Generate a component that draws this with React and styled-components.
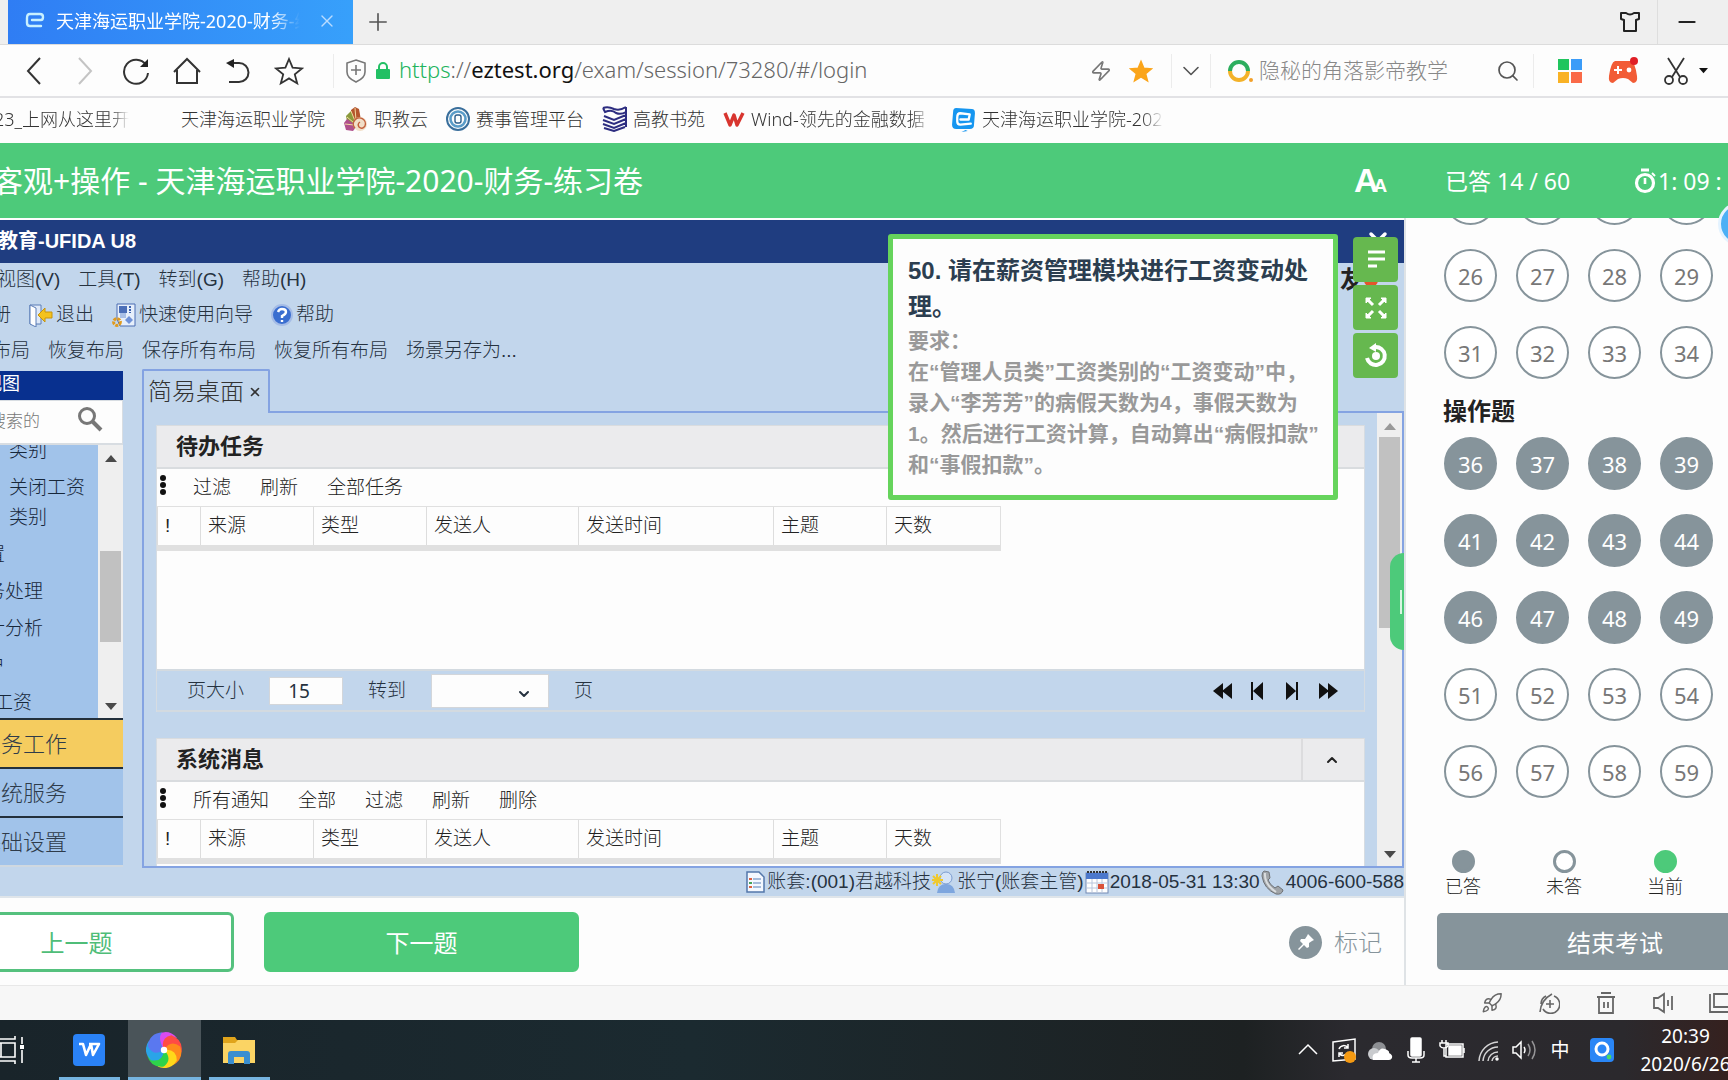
import React, { useState } from 'react'
import styled, { createGlobalStyle } from 'styled-components'
import { ChevronDown, ChevronUp, Zap, Search, Minus, Plus, X, Rocket } from 'lucide-react'

const FONT = '"Noto Sans", "Noto Sans CJK SC", sans-serif'
const ARIAL = '"Liberation Sans", "Noto Sans CJK SC", sans-serif'

const bookmarks = [
  { text: '天津海运职业学院' },
  { text: '职教云', icon: 'shell' },
  { text: '赛事管理平台', icon: 'ring' },
  { text: '高教书苑', icon: 'book' },
  { text: 'Wind-领先的金融数据', icon: 'wind', fade: true },
  { text: '天津海运职业学院-202', icon: 'ez', fade: true },
]

const treeItems = [
  { text: '类别', start: 9 },
  { text: '关闭工资类别', start: 9 },
  { text: '设置', start: -33 },
  { text: '业务处理', start: -33 },
  { text: '统计分析', start: -33 },
  { text: '客户', start: -33 },
  { text: '件工资', start: -25 },
]

const columns = [
  { text: '!', width: 43 },
  { text: '来源', width: 113 },
  { text: '类型', width: 113 },
  { text: '发送人', width: 152 },
  { text: '发送时间', width: 195 },
  { text: '主题', width: 113 },
  { text: '天数', width: 114 },
]

const objective = [26, 27, 28, 29, 31, 32, 33, 34]
const practical = [36, 37, 38, 39, 41, 42, 43, 44, 46, 47, 48, 49, 51, 52, 53, 54, 56, 57, 58, 59]

/* ---------- icons ---------- */

const EzLogo = ({ size = 24, bg = '#1696f0', fg = '#fff' }) => (
  <svg width={size} height={size} viewBox="0 0 24 24" fill="none">
    <path d="M5 1 L20 2 Q23 2 23 6 L22 18 Q22 21 18 21 L5 21 Q1 21 1 17 L2 5 Q2 1 5 1Z" fill={bg} />
    <path d="M10 24 L14 22 L16 23 Z" fill={bg} />
    <path d="M9 12 L17 12 L18 7 L9 6 Q6 6 6 10 L6 14 Q6 17 9 17 L19 16" stroke={fg} strokeWidth="2.2" strokeLinejoin="round" strokeLinecap="round" />
  </svg>
)

const TabLogo = () => (
  <svg width="20" height="20" viewBox="0 0 20 20" fill="none" stroke="#c8f0ff" strokeWidth="2.4" strokeLinejoin="round" strokeLinecap="round">
    <path d="M7 9 H16 Q18 9 18 6 Q18 3 15 3 L5 3 Q2 3 2 7 L2 12 Q2 15 5 15 H16" />
  </svg>
)

const BookmarkIcon = ({ name }) => {
  if (name === 'shell') return (
    <svg width="25" height="26" viewBox="0 0 25 26" fill="none">
      <path d="M12 1 L16 3 L18 14 L8 14 L8 4Z" fill="#b4552d" />
      <path d="M3 10 L8 5 L12 16 L5 20Z" fill="#8a9a3c" />
      <path d="M1 17 L4 13 L14 20 L10 25 L3 24Z" fill="#b0508c" />
      <path d="M12 2 L13 14 M8 5 L12 15 M4 11 L11 17 M2 18 L11 19" stroke="#f3d9a0" />
      <circle cx="17" cy="18" r="7" fill="#f1dfc8" />
      <path d="M12 22 A6 6 0 1 1 22 20 Q19 24 16 21 Q14 18 17 16" stroke="#c2603c" strokeWidth="1.4" />
    </svg>
  )
  if (name === 'ring') return (
    <svg width="24" height="24" viewBox="0 0 24 24" fill="none">
      <circle cx="12" cy="12" r="11" stroke="#3a6f9c" strokeWidth="2" />
      <circle cx="12" cy="12" r="7.5" stroke="#5a9cc8" strokeWidth="2.6" />
      <rect x="9" y="8" width="6" height="8" rx="2" stroke="#2c5f8c" strokeWidth="1.4" />
    </svg>
  )
  if (name === 'book') return (
    <svg width="25" height="26" viewBox="0 0 25 26" fill="none" stroke="#2d2d80" strokeWidth="2">
      <path d="M1 2 Q6 0 12 3 Q18 5 24 1 M1 2 L3 6 Q10 3 14 7 Q19 9 24 6 M2 10 L12 14 L24 9 M1 14 L12 18 L24 13 M1 18 L12 22 L24 17 M2 22 L12 25 L23 21 M24 1V21" />
    </svg>
  )
  if (name === 'wind') return (
    <svg width="22" height="17" viewBox="0 0 22 17" fill="none" stroke="#d8352f" strokeWidth="3.4" strokeLinejoin="round">
      <path d="M2 2 L7 14 L11 4 L14 14 L20 2" />
    </svg>
  )
  return <EzLogo size={25} />
}

const ArrowIcon = ({ right }) => (
  <svg width="16" height="30" viewBox="0 0 16 30" fill="none" stroke="currentColor" strokeWidth="2">
    <path d={right ? 'M2 2 L14 15 L2 28' : 'M14 2 L2 15 L14 28'} />
  </svg>
)

const HomeIcon = () => (
  <svg width="28" height="28" viewBox="0 0 28 28" fill="none" stroke="#333" strokeWidth="2">
    <path d="M1 15 L14 2 L27 15 M4 13 V26 H24 V13" />
  </svg>
)

const FiveStar = ({ size = 30, fill = 'none', stroke = '#333' }) => (
  <svg width={size} height={size} viewBox="0 0 30 30" fill={fill} stroke={stroke} strokeWidth="1.8">
    <path d="M15 3 L18.6 11.6 L28 12.4 L20.8 18.4 L23.2 27.4 L15 22.4 L6.8 27.4 L9.2 18.4 L2 12.4 L11.4 11.6Z" />
  </svg>
)

const SkinIcon = () => (
  <svg width="22" height="22" viewBox="0 0 22 22" fill="none" stroke="#222" strokeWidth="2" strokeLinejoin="round">
    <path d="M2 2 H7 Q11 5 15 2 H20 V8 L17 9 V20 H5 V9 L2 8Z" />
  </svg>
)

const ReloadIcon = () => (
  <svg width="28" height="28" viewBox="0 0 28 28" fill="none" stroke="#333" strokeWidth="2">
    <path d="M24 8 A12 12 0 1 0 26 16" />
    <path d="M26 2 V10 H18Z" fill="#222" stroke="none" />
  </svg>
)

const UndoIcon = () => (
  <svg width="26" height="26" viewBox="0 0 26 26" fill="none" stroke="#333" strokeWidth="2">
    <path d="M3 5 H14 A9 9 0 0 1 14 24 H4" />
    <path d="M1 5 L9 1 V10Z" fill="#222" stroke="none" />
  </svg>
)

const ShieldIcon = () => (
  <svg width="22" height="24" viewBox="0 0 22 24" fill="none" stroke="#777" strokeWidth="1.6">
    <path d="M11 1 L20 4 V13 Q20 19 11 23 Q2 19 2 13 V4Z M6 11 H16 M11 6 V16" />
  </svg>
)

const LockIcon = () => (
  <svg width="16" height="18" viewBox="0 0 16 18" fill="none">
    <path d="M4 8 V5 A4 4 0 0 1 12 5 V8" stroke="#22c064" strokeWidth="2" />
    <rect x="1" y="7" width="14" height="10" rx="1" fill="#22c064" />
  </svg>
)

const SearchLogo = () => (
  <svg width="26" height="24" viewBox="0 0 26 24" fill="none" strokeWidth="4">
    <path d="M2 12 A9 9 0 0 1 20 12" stroke="#2cae5e" />
    <path d="M2 12 A9 9 0 0 0 20 12" stroke="#f3b229" />
    <circle cx="23" cy="21" r="2" fill="#f3a029" />
  </svg>
)

const TilesIcon = () => (
  <svg width="24" height="24" viewBox="0 0 24 24">
    <rect width="11" height="11" fill="#20c55e" /><rect x="13" width="11" height="11" fill="#3b9cf8" />
    <rect y="13" width="11" height="11" fill="#f9b225" /><rect x="13" y="13" width="11" height="11" fill="#fa6a48" />
  </svg>
)

const GameIcon = () => (
  <svg width="32" height="28" viewBox="0 0 32 28">
    <path d="M8 4 H24 Q28 5 30 19 Q31 26 26 26 L21 22 Q16 20 11 22 L6 26 Q1 26 2 19 Q4 5 8 4Z" fill="#f25c36" />
    <path d="M7 13 H15 M11 9 V17" stroke="#fff" strokeWidth="2" />
    <circle cx="22" cy="13" r="2.4" fill="#fff" /><circle cx="27" cy="4" r="4" fill="#e01f26" />
  </svg>
)

const ScissorsIcon = () => (
  <svg width="24" height="28" viewBox="0 0 24 28" fill="none" stroke="#333" strokeWidth="1.8">
    <path d="M4 1 L16 20 M20 1 L8 20" /><circle cx="5" cy="23" r="4" /><circle cx="19" cy="23" r="4" />
  </svg>
)

const StopwatchIcon = () => (
  <svg width="22" height="26" viewBox="0 0 22 26" fill="none" stroke="#fff">
    <circle cx="11" cy="15" r="8.5" strokeWidth="3.2" />
    <path d="M7 2 H15" strokeWidth="3" /><path d="M11 10 V16" strokeWidth="2.6" /><path d="M18 5 L21 8" strokeWidth="2" />
  </svg>
)

const ExitIcon = () => (
  <svg width="24" height="24" viewBox="0 0 24 24">
    <path d="M1 2 H12 V21 H1Z" fill="#dfe9f8" stroke="#5b7cb6" />
    <path d="M1 2 L7 5 V24 L1 21Z" fill="#fff" stroke="#5b7cb6" />
    <path d="M9 12 L16 5 V9 H23 V15 H16 V19Z" fill="#f3c21e" stroke="#c8930b" />
  </svg>
)

const WizardIcon = () => (
  <svg width="24" height="24" viewBox="0 0 24 24">
    <path d="M5 1 H23 V23 H8 L5 16Z" fill="#e6effb" stroke="#4a6cb2" />
    <rect x="7" y="3" width="8" height="7" fill="#4b6fb8" /><path d="M8 10 H14 V15 H8Z" fill="#a9c0e6" />
    <path d="M18 3 V10" stroke="#3b62b0" strokeWidth="2" strokeDasharray="2 1" />
    <path d="M17 13 L21 17 L17 21 L13 17Z" fill="#6f92d8" />
    <circle cx="5" cy="19" r="3.4" fill="none" stroke="#e09a1d" strokeWidth="3" strokeDasharray="3 1" />
  </svg>
)

const HelpIcon = () => (
  <svg width="22" height="22" viewBox="0 0 22 22" fill="none">
    <circle cx="11" cy="11" r="10" fill="#3a6ed0" stroke="#a5bce6" strokeWidth="2" />
    <path d="M7 8 Q8 5 11 5 Q15 5 15 8 Q15 10 11 12 V14 M11 16 V18" stroke="#fff" strokeWidth="2.4" />
  </svg>
)

const DocIcon = () => (
  <svg width="20" height="24" viewBox="0 0 20 24">
    <path d="M1 2 H13 L18 7 V22 H1Z" fill="#f4f8ff" stroke="#5377aa" strokeWidth="1.5" />
    <path d="M7 9 H15 M7 13 H15 M7 17 H15" stroke="#8ba6ce" strokeWidth="1.5" />
    <path d="M3 9 H6 M3 17 H6" stroke="#dd6040" strokeWidth="2" /><path d="M3 13 H6" stroke="#46a358" strokeWidth="2" />
  </svg>
)

const UserIcon = () => (
  <svg width="24" height="24" viewBox="0 0 24 24">
    <path d="M5 23 Q6 14 14 14 Q22 14 23 23Z" fill="#7ea6de" /><circle cx="14" cy="8" r="6" fill="#d5e4f7" stroke="#7b9cd0" />
    <path d="M5 4 V16 M0 10 H11 M1 6 L9 14 M9 6 L1 14" stroke="#f0c92d" strokeWidth="2" />
  </svg>
)

const CalendarIcon = () => (
  <svg width="24" height="24" viewBox="0 0 24 24">
    <rect x="1" y="3" width="22" height="20" fill="#fff" stroke="#7289b3" /><rect x="1" y="3" width="22" height="6" fill="#4c78cc" />
    <path d="M2 2 H22" stroke="#333" strokeWidth="2" strokeDasharray="2 1" />
    <path d="M2 13 H22 M2 18 H22 M7 9 V23 M12 9 V23 M17 9 V23" stroke="#b9c6dc" /><rect x="13" y="14" width="6" height="5" fill="#da5239" />
  </svg>
)

const PhoneIcon = () => (
  <svg width="24" height="25" viewBox="0 0 24 25">
    <path d="M3 1 L8 2 L9 8 L7 10 Q9 15 14 18 L17 16 L22 20 Q21 25 15 24 Q3 19 1 6 Q1 2 3 1Z" fill="#a0a4a8" stroke="#6e7175" />
    <path d="M4 3 Q3 14 15 22" stroke="#dadddf" strokeWidth="2" fill="none" />
  </svg>
)

const ListGlyph = () => (
  <svg width="20" height="20" viewBox="0 0 20 20" stroke="#fff" strokeWidth="3"><path d="M2 2 H19 M2 9 H19 M2 16 H11" /></svg>
)

const ExpandGlyph = () => (
  <svg width="22" height="22" viewBox="0 0 22 22" fill="#fff" stroke="#fff" strokeWidth="3">
    <path d="M3 3 L8 8 M19 3 L14 8 M3 19 L8 14 M19 19 L14 14" />
    <path d="M1 1 H6 L1 6Z M21 1 V6 L16 1Z M1 21 V16 L6 21Z M21 21 H16 L21 16Z" strokeWidth="1" />
  </svg>
)

const RestartGlyph = () => (
  <svg width="24" height="25" viewBox="0 0 24 25" fill="none" stroke="#fff" strokeWidth="4">
    <path d="M11 4 A9 9 0 1 1 3 15" /><circle cx="12" cy="13" r="4" fill="#fff" stroke="none" />
    <path d="M5 5 L12 0 V9Z" fill="#fff" stroke="none" />
  </svg>
)

const PinGlyph = () => (
  <svg width="20" height="20" viewBox="0 0 20 20" fill="#fff">
    <path d="M12 2 L18 8 L16 9 L13 11 L13 15 L11 16 L8 13 L3 18 L2 17 L7 12 L4 9 L5 7 L9 7 L11 4Z" />
  </svg>
)

const PageGlyph = ({ type }) => (
  <svg width="20" height="18" viewBox="0 0 20 18" fill="#111">
    {type === 'first' && <path d="M10 1 V17 L0 9Z M19 1 V17 L9 9Z" />}
    {type === 'prev' && <path d="M3 0 H5 V18 H3Z M15 0 V18 L5 9Z" />}
    {type === 'next' && <path d="M13 0 H15 V18 H13Z M3 0 V18 L13 9Z" />}
    {type === 'last' && <path d="M1 1 V17 L11 9Z M10 1 V17 L20 9Z" />}
  </svg>
)

const Tri = ({ down, size = 12, color = '#4a4a4a' }) => (
  <svg width={size} height="7" viewBox="0 0 12 7" fill={color}><path d={down ? 'M0 0H12L6 7Z' : 'M0 7H12L6 0Z'} /></svg>
)

const DotsIcon = () => (
  <svg width="6" height="20" viewBox="0 0 6 20" fill="#111"><circle cx="3" cy="3" r="3" /><circle cx="3" cy="10" r="3" /><circle cx="3" cy="17" r="3" /></svg>
)

const BoostIcon = () => (
  <svg width="22" height="22" viewBox="0 0 22 22" fill="none" stroke="#666" strokeWidth="1.6">
    <path d="M2 20 Q3 8 14 2 M16 4 A9 9 0 1 1 5 17 M8 4 A9 9 0 0 0 3 12 M8 12 H16 M12 8 V16" />
  </svg>
)

const TrashIcon = () => (
  <svg width="20" height="22" viewBox="0 0 20 22" fill="none" stroke="#666" strokeWidth="1.8">
    <path d="M5 1 H15 M1 5 H19 M3 5 V21 H17 V5 M8 10 V16 M12 10 V16" />
  </svg>
)

const SpeakerIcon = () => (
  <svg width="22" height="22" viewBox="0 0 22 22" fill="none" stroke="#666" strokeWidth="1.8">
    <path d="M2 6 H6 L12 2 V20 L6 16 H2Z M16 8 V14 M20 4 V18" />
  </svg>
)

const WindowsIcon = () => (
  <svg width="24" height="22" viewBox="0 0 24 22" fill="none" stroke="#666" strokeWidth="1.8">
    <path d="M6 2 H24 V15 H6Z M2 2 V20 H24" />
  </svg>
)

const TaskViewIcon = () => (
  <svg width="28" height="28" viewBox="0 0 28 28" fill="none" stroke="#fff" strokeWidth="1.6">
    <path d="M0 3 H15 V0 M0 7 H15 V21 H0 M0 25 H15 V28 M1 7 V21 M22 1 V8 M22 14 V27" /><rect x="20" y="9" width="4" height="4" fill="#fff" stroke="none" />
  </svg>
)

const WpsIcon = () => (
  <svg width="32" height="32" viewBox="0 0 32 32" fill="none">
    <rect width="32" height="32" rx="4" fill="#2a82f7" /><path d="M6 10 H10 L13 21 L18 10 L20 21 L26 10 H16" stroke="#fff" strokeWidth="2.6" strokeLinejoin="round" />
  </svg>
)

const swirl = ['#d84bf0', '#ff4b45', '#ff8a1c', '#ffd81a', '#2ed34a', '#2aa4e8', '#5a78f0']
const SwirlIcon = () => (
  <svg width="36" height="36" viewBox="-18 -18 36 36">
    {swirl.map((color, i) => (
      <path key={color} d="M0 0 Q-12 -4 -7 -15 Q4 -22 13 -12 Q6 -14 0 0Z" fill={color} transform={`rotate(${i * 51.4})`} />
    ))}
    <circle r="3.2" fill="#fff" />
  </svg>
)

const FolderIcon = () => (
  <svg width="32" height="28" viewBox="0 0 32 28">
    <path d="M0 1 H12 L14 4 H32 V27 H0Z" fill="#e0a41b" /><path d="M0 7 H12 L15 4 H32 V27 H0Z" fill="#fbd464" />
    <path d="M5 28 V18 Q5 15 8 15 H24 Q27 15 27 18 V28 H21 V21 H11 V28Z" fill="#3b8fd0" />
  </svg>
)

const TrayIcon = ({ name }) => {
  const line = { fill: 'none', stroke: '#fff', strokeWidth: 1.5 }
  return (
    <svg width="26" height="26" viewBox="0 0 26 26" {...line}>
      {name === 'up' && <path d="M4 17 L13 8 L22 17" />}
      {name === 'sync' && <>
        <path d="M2 5 L24 2 V22 L2 24Z M8 12 A5 5 0 0 1 17 11 M17 15 A5 5 0 0 1 8 16 M17 7 V11 H13 M8 20 V16 H12" />
        <circle cx="19" cy="20" r="6" fill="#f59a12" stroke="none" />
      </>}
      {name === 'cloud' && <g stroke="none">
        <circle cx="12" cy="12" r="7" fill="#8d8f93" /><circle cx="7" cy="17" r="6" fill="#c9cbce" />
        <path d="M6 23 Q4 16 11 16 Q13 10 18 12 Q23 14 22 16 Q26 18 25 21 Q24 23 22 23Z" fill="#fff" />
      </g>}
      {name === 'mic' && <><rect x="8" y="1" width="10" height="18" rx="1" fill="#fff" /><path d="M5 14 V18 Q5 21 9 21 H17 Q21 21 21 18 V14 M13 21 V25 M9 25 H17" /></>}
      {name === 'power' && <><rect x="7" y="7" width="17" height="13" /><rect x="10" y="9" width="12" height="9" fill="#fff" /><path d="M25 11 V16 M3 3 V6 M7 3 V6 M1 6 H9 V9 Q8 11 5 11 Q2 11 1 9Z M5 11 V19 H7" /></>}
      {name === 'wifi' && <><path d="M4 24 A20 20 0 0 1 23 5 M8 24 A15 15 0 0 1 23 10 M13 24 A10 10 0 0 1 23 15 M17 24 A6 6 0 0 1 23 19" opacity="0.8" /><circle cx="22" cy="22" r="1" fill="#fff" /></>}
      {name === 'sound' && <><path d="M2 10 H5 L10 5 V21 L5 16 H2Z M13 10 Q15 13 13 16" /><path d="M17 7 Q21 13 17 19 M21 4 Q27 13 21 22" opacity="0.5" /></>}
      {name === 'q' && <><rect x="1" y="1" width="24" height="24" rx="4" fill="#2a86f6" stroke="none" /><circle cx="13" cy="12" r="6" strokeWidth="3" /><circle cx="20" cy="20" r="2.4" fill="#4bd964" stroke="none" /></>}
    </svg>
  )
}

/* ---------- pieces ---------- */

const TaskTable = () => (
  <Table>
    <colgroup>{columns.map(c => <Col key={c.text} $w={c.width} />)}</colgroup>
    <thead>
      <tr>{columns.map(c => <th key={c.text} scope="col">{c.text}</th>)}</tr>
    </thead>
  </Table>
)

const Card = ({ title, tools, children }) => (
  <CardBox>
    <CardHeader>
      <h2>{title}</h2>
      <button aria-label="收起"><ChevronUp size={16} strokeWidth={3} /></button>
    </CardHeader>
    <CardTools>
      <DotsIcon />
      {tools.map(t => <TextButton key={t}>{t}</TextButton>)}
    </CardTools>
    <TaskTable />
    {children}
  </CardBox>
)

function App() {
  const [pageSize, setPageSize] = useState('15')
  const [keyword, setKeyword] = useState('隐秘的角落影帝教学')

  return (
    <Page>
      <GlobalStyle />

      <TabBar>
        <BrowserTab>
          <TabLogo />
          <Fade $w={244}>天津海运职业学院-2020-财务-练</Fade>
          <button aria-label="关闭"><X size={20} strokeWidth={1.6} /></button>
        </BrowserTab>
        <PlainButton aria-label="新标签页"><Plus size={28} strokeWidth={1.4} /></PlainButton>
        <WindowTools>
          <PlainButton aria-label="皮肤"><SkinIcon /></PlainButton>
          <PlainButton aria-label="最小化"><Minus size={26} strokeWidth={2} /></PlainButton>
        </WindowTools>
      </TabBar>

      <AddressBar>
        <NavButton aria-label="后退"><ArrowIcon /></NavButton>
        <NavButton aria-label="前进" disabled><ArrowIcon right /></NavButton>
        <NavButton aria-label="刷新"><ReloadIcon /></NavButton>
        <NavButton aria-label="主页"><HomeIcon /></NavButton>
        <NavButton aria-label="恢复"><UndoIcon /></NavButton>
        <NavButton aria-label="收藏"><FiveStar /></NavButton>
        <UrlBox>
          <ShieldIcon />
          <LockIcon />
          <Url><em>https</em>://<b>eztest.org</b>/exam/session/73280/#/login</Url>
          <Zap size={22} strokeWidth={1.8} color="#777" />
          <FiveStar size={24} fill="#fba51b" stroke="#fba51b" />
        </UrlBox>
        <DropButton aria-label="展开"><ChevronDown size={28} strokeWidth={1.4} /></DropButton>
        <SearchBox>
          <SearchLogo />
          <input aria-label="搜索" value={keyword} onChange={e => setKeyword(e.target.value)} />
          <Search size={24} strokeWidth={1.7} color="#555" />
        </SearchBox>
        <Plugins>
          <TilesIcon />
          <GameIcon />
          <span><ScissorsIcon /><Tri down size={9} color="#111" /></span>
        </Plugins>
      </AddressBar>

      <Bookmarks>
        <Fade $w={135}>23_上网从这里开</Fade>
        {bookmarks.map(b => (
          <a href="#" key={b.text}>
            {b.icon && <BookmarkIcon name={b.icon} />}
            {b.fade ? <Fade $w={182}>{b.text}</Fade> : b.text}
          </a>
        ))}
      </Bookmarks>

      <ExamHeader>
        <h1>客观+操作 - 天津海运职业学院-2020-财务-练习卷</h1>
        <FontSize aria-label="字号">A<small>A</small></FontSize>
        <Answered>已答 14 / 60</Answered>
        <Timer><StopwatchIcon />1: 09 :</Timer>
        <Bubble><EzLogo size={24} bg="none" /></Bubble>
      </ExamHeader>

      <Body>
        <Main>
          <Erp>
            <ErpTitle>教育-UFIDA U8</ErpTitle>
            <MenuRow $h={33}>
              <TextButton>视图(V)</TextButton>
              <TextButton>工具(T)</TextButton>
              <TextButton>转到(G)</TextButton>
              <TextButton>帮助(H)</TextButton>
              <Brand>友<i /></Brand>
            </MenuRow>
            <MenuRow $h={37} $cut={8}>
              <TextButton>册</TextButton>
              <TextButton><ExitIcon />退出</TextButton>
              <TextButton><WizardIcon />快速使用向导</TextButton>
              <TextButton><HelpIcon />帮助</TextButton>
            </MenuRow>
            <MenuRow $h={35} $cut={8}>
              <TextButton>布局</TextButton>
              <TextButton>恢复布局</TextButton>
              <TextButton>保存所有布局</TextButton>
              <TextButton>恢复所有布局</TextButton>
              <TextButton>场景另存为...</TextButton>
            </MenuRow>

            <WorkArea>
              <Side>
                <SideTitle>视图</SideTitle>
                <SideSearch>
                  <input aria-label="搜索功能" placeholder="搜索的" />
                  <svg width="25" height="25" viewBox="0 0 25 25" fill="none" stroke="#777">
                    <circle cx="9" cy="9" r="7.5" strokeWidth="3" /><path d="M14 14 L23 23" strokeWidth="4" />
                  </svg>
                </SideSearch>
                <TreeWrap>
                  <Tree>
                    {treeItems.map((t, i) => <li key={i}><TreeText $start={t.start}>{t.text}</TreeText></li>)}
                  </Tree>
                  <ScrollTrack><Tri /><Thumb $top={89} $h={91} /><Tri down /></ScrollTrack>
                </TreeWrap>
                <SideTab $active>业务工作</SideTab>
                <SideTab>系统服务</SideTab>
                <SideTab>基础设置</SideTab>
              </Side>

              <Desk>
                <DeskTab>简易桌面<button aria-label="关闭桌面"><X size={14} strokeWidth={2.8} /></button></DeskTab>
                <DeskBody>
                  <Cards>
                    <Card title="待办任务" tools={['过滤', '刷新', '全部任务']}>
                      <Blank />
                      <Pager>
                        <label htmlFor="size">页大小</label>
                        <input id="size" value={pageSize} onChange={e => setPageSize(e.target.value)} />
                        <label htmlFor="goto">转到</label>
                        <SelectWrap>
                          <select id="goto"><option></option></select>
                          <ChevronDown size={16} strokeWidth={3} />
                        </SelectWrap>
                        <span>页</span>
                        <PageNav>
                          {['first', 'prev', 'next', 'last'].map(t => <button key={t} aria-label={t}><PageGlyph type={t} /></button>)}
                        </PageNav>
                      </Pager>
                    </Card>
                    <Card title="系统消息" tools={['所有通知', '全部', '过滤', '刷新', '删除']} />
                  </Cards>
                  <ScrollTrack><Tri color="#999" /><Thumb $top={7} $h={191} /><Tri down /></ScrollTrack>
                </DeskBody>
              </Desk>
            </WorkArea>

            <StatusRow>
              <DocIcon /><span>账套:(001)君越科技</span>
              <UserIcon /><span>张宁(账套主管)</span>
              <CalendarIcon /><span>2018-05-31 13:30</span>
              <PhoneIcon /><span>4006-600-588</span>
            </StatusRow>

            <Question>
              <h3>50. 请在薪资管理模块进行工资变动处<br />理。</h3>
              <p>
                要求：<br />
                在“管理人员类”工资类别的“工资变动”中，<br />
                录入“李芳芳”的病假天数为4，事假天数为<br />
                1。然后进行工资计算，自动算出“病假扣款”<br />
                和“事假扣款”。
              </p>
            </Question>
            <CloseMark><X size={28} strokeWidth={3} /></CloseMark>
            <SideTools>
              <button aria-label="题目"><ListGlyph /></button>
              <button aria-label="全屏"><ExpandGlyph /></button>
              <button aria-label="重做"><RestartGlyph /></button>
            </SideTools>
            <Handle aria-label="收起答题卡" />
          </Erp>

          <Actions>
            <ActionButton $cut={81}>上一题</ActionButton>
            <ActionButton $solid>下一题</ActionButton>
            <Mark><i><PinGlyph /></i>标记</Mark>
          </Actions>
        </Main>

        <Aside>
          <Sheet>
            <Numbers>
              {['第21题', '第22题', '第23题', '第24题'].map(n => <Num key={n} aria-label={n} />)}
              {objective.map(n => <Num key={n}>{n}</Num>)}
            </Numbers>
            <h2>操作题</h2>
            <Numbers>
              {practical.map(n => <Num key={n} $done={n < 50}>{n}</Num>)}
            </Numbers>
          </Sheet>
          <Legend>
            <li><Dot $bg="#86949b" $line="#86949b" />已答</li>
            <li><Dot $bg="#fff" $line="#86949b" />未答</li>
            <li><Dot $bg="#4dca7a" $line="#4dca7a" />当前</li>
          </Legend>
          <Finish>结束考试</Finish>
        </Aside>
      </Body>

      <BrowserFooter>
        <PlainButton aria-label="加速"><Rocket size={22} strokeWidth={1.6} /></PlainButton>
        <PlainButton aria-label="下载"><BoostIcon /></PlainButton>
        <PlainButton aria-label="清理"><TrashIcon /></PlainButton>
        <PlainButton aria-label="声音"><SpeakerIcon /></PlainButton>
        <PlainButton aria-label="窗口"><WindowsIcon /></PlainButton>
      </BrowserFooter>

      <TaskBar>
        <TaskView aria-label="任务视图"><TaskViewIcon /></TaskView>
        <TaskApp aria-label="WPS"><WpsIcon /></TaskApp>
        <TaskApp aria-label="浏览器" $active><SwirlIcon /></TaskApp>
        <TaskApp aria-label="文件"><FolderIcon /></TaskApp>
        <Tray>
          {['up', 'sync', 'cloud', 'mic', 'power', 'wifi', 'sound'].map(n => <TrayIcon key={n} name={n} />)}
          <span>中</span>
          <TrayIcon name="q" />
        </Tray>
        <Clock><span>20:39</span><span>2020/6/26</span></Clock>
      </TaskBar>
    </Page>
  )
}

export default App

/* ---------- styles ---------- */

const GlobalStyle = createGlobalStyle`
  *{
    box-sizing: border-box;
  }
  body{
    margin: 0;
    font-family: ${FONT};
    font-weight: 300;
    color: #222;
    background: #fdfdfd;
  }
  h1,h2,h3,p,ul{
    margin: 0;
    padding: 0;
    list-style: none;
  }
  button,input,select{
    font: inherit;
    color: inherit;
    border: 0;
    padding: 0;
    background: none;
    outline: none;
  }
  a{
    color: inherit;
    text-decoration: none;
  }
  svg{
    flex: none;
  }
`

const Page = styled.div`
  min-height: 100vh;
  display: flex;
  flex-direction: column;
  overflow: hidden;
`

const PlainButton = styled.button`
  display: flex;
  align-items: center;
  justify-content: center;
  color: #555;
`

const TabBar = styled.div`
  display: flex;
  height: 45px;
  padding-left: 8px;
  background: #efefef;
  border-bottom: 1px solid #dcdcdc;
  > ${PlainButton}{
    width: 50px;
  }
`

const Fade = styled.span`
  width: ${p => p.$w}px;
  overflow: hidden;
  white-space: nowrap;
  mask-image: linear-gradient(90deg, #000 88%, transparent);
`

const BrowserTab = styled.div`
  display: flex;
  align-items: center;
  gap: 11px;
  width: 345px;
  padding: 0 16px 2px 17px;
  font-size: 18px;
  line-height: 26px;
  font-weight: 400;
  color: #fff;
  background: linear-gradient(90deg, #2f7df4, #37a0fb);
  button{
    display: flex;
    margin-left: auto;
    color: #b9dcff;
  }
`

const WindowTools = styled.div`
  display: flex;
  margin-left: auto;
  ${PlainButton}{
    width: 71px;
    color: #222;
  }
  ${PlainButton} + ${PlainButton}{
    padding-right: 12px;
    border-left: 1px solid #dedede;
  }
  ${PlainButton}:first-child{
    padding-left: 16px;
  }
`

const AddressBar = styled.div`
  display: flex;
  align-items: center;
  height: 53px;
  padding-left: 8px;
  background: #fdfdfd;
  border-bottom: 2px solid #e2e2e5;
`

const NavButton = styled(PlainButton)`
  width: 51px;
  color: ${p => (p.disabled ? '#c4c4c4' : '#333')};
`

const UrlBox = styled.div`
  display: flex;
  flex: 1;
  align-items: center;
  height: 34px;
  margin-left: 19px;
  padding: 0 18px 0 11px;
  gap: 8px;
  border-left: 1px solid #ececec;
  border-right: 1px solid #ececec;
  > svg:nth-last-child(2){
    margin-right: 9px;
  }
`

const Url = styled.div`
  flex: 1;
  padding-bottom: 3px;
  font-size: 22px;
  line-height: 30px;
  color: #666;
  em{
    font-style: normal;
    color: #22b45c;
  }
  b{
    font-weight: 400;
    color: #111;
  }
`

const DropButton = styled(PlainButton)`
  width: 38px;
  height: 34px;
`

const SearchBox = styled.label`
  display: flex;
  align-items: center;
  width: 324px;
  height: 34px;
  gap: 5px;
  padding: 0 13px 0 17px;
  border-left: 1px solid #ececec;
  border-right: 1px solid #ececec;
  input{
    flex: 1;
    min-width: 0;
    padding-bottom: 2px;
    font-size: 21px;
    line-height: 30px;
    color: #888;
  }
`

const Plugins = styled.div`
  display: flex;
  align-items: center;
  width: 194px;
  padding-left: 24px;
  gap: 25px;
  span{
    display: flex;
    align-items: center;
    gap: 11px;
  }
`

const Bookmarks = styled.nav`
  display: flex;
  align-items: center;
  height: 45px;
  padding-bottom: 3px;
  gap: 18px;
  font-size: 18px;
  line-height: 26px;
  color: #333;
  background: #fdfdfd;
  white-space: nowrap;
  > ${Fade}{
    margin-left: -6px;
    margin-right: 34px;
  }
  a{
    display: flex;
    align-items: center;
    gap: 6px;
  }
`

const ExamHeader = styled.header`
  position: relative;
  display: flex;
  align-items: center;
  height: 75px;
  color: #fff;
  background: #4dca7a;
  white-space: nowrap;
  h1{
    flex: 1;
    margin-left: -7px;
    font-size: 30px;
    line-height: 44px;
    font-weight: 400;
  }
`

const FontSize = styled.button`
  width: 91px;
  padding-top: 4px;
  text-align: left;
  font-family: ${ARIAL};
  font-size: 34px;
  line-height: 34px;
  font-weight: 700;
  small{
    margin-left: -5px;
    font-size: 19px;
  }
`

const Answered = styled.div`
  width: 189px;
  font-size: 23px;
  line-height: 34px;
  font-weight: 400;
`

const Timer = styled.div`
  display: flex;
  align-items: center;
  width: 94px;
  gap: 2px;
  font-size: 23px;
  line-height: 34px;
  font-weight: 400;
`

const Bubble = styled.div`
  position: absolute;
  right: -34px;
  top: 59px;
  z-index: 2;
  width: 44px;
  height: 44px;
  padding: 7px 4px;
  border: 3px solid #e4f3ff;
  border-radius: 50%;
  background: #4cb0f5;
`

const Body = styled.div`
  display: flex;
  flex: 1;
`

const Main = styled.main`
  flex: 1;
  min-width: 0;
  padding-top: 2px;
`

const Erp = styled.section`
  position: relative;
  overflow: hidden;
  font-family: ${ARIAL};
  background: #c2d6ec;
  border-bottom: 2px solid #dfe5ea;
`

const ErpTitle = styled.div`
  height: 43px;
  text-indent: -2px;
  font-size: 20px;
  line-height: 42px;
  font-weight: 700;
  color: #fff;
  background: #1f3d80;
`

const TextButton = styled.button`
  display: flex;
  align-items: center;
  gap: 3px;
  white-space: nowrap;
`

const MenuRow = styled.div`
  display: flex;
  align-items: center;
  height: ${p => p.$h}px;
  gap: 18px;
  font-size: 19px;
  line-height: 28px;
  color: #26323f;
  > :first-child{
    margin-left: -${p => p.$cut || 3}px;
  }
`

const Brand = styled.b`
  display: flex;
  align-items: center;
  margin-left: auto;
  margin-right: 26px;
  font-size: 24px;
  font-weight: 700;
  color: #222;
  i{
    width: 14px;
    height: 14px;
    border-radius: 50%;
    background: #e4552b;
  }
`

const WorkArea = styled.div`
  display: flex;
  align-items: flex-start;
  gap: 19px;
`

const Side = styled.aside`
  width: 123px;
  margin-top: 3px;
  overflow: hidden;
  border-bottom: 2px solid #cfd8e0;
`

const SideTitle = styled.div`
  height: 29px;
  padding-right: 103px;
  direction: rtl;
  font-size: 18px;
  line-height: 27px;
  font-weight: 400;
  white-space: nowrap;
  color: #fff;
  background: #08308f;
`

const SideSearch = styled.label`
  display: flex;
  align-items: center;
  justify-content: space-between;
  height: 45px;
  padding-right: 19px;
  background: #fdfdfd;
  border: 1px solid #d8dde2;
  border-left: 0;
  border-bottom-width: 2px;
  input{
    width: 60px;
    margin-left: -11px;
    font-size: 17px;
    line-height: 24px;
  }
  input::placeholder{
    color: #777;
  }
  svg{
    margin-bottom: 6px;
  }
`

const TreeWrap = styled.div`
  display: flex;
  height: 273px;
  overflow: hidden;
`

const Tree = styled.ul`
  display: flex;
  flex: 1;
  flex-direction: column;
  min-width: 0;
  gap: 7px;
  margin-top: -9px;
  overflow: hidden;
  font-size: 19px;
  line-height: 30px;
  color: #17273a;
  background: #a1c3ea;
`

const TreeText = styled.div`
  width: 80px;
  margin-left: ${p => p.$start}px;
`

const ScrollTrack = styled.div`
  display: flex;
  flex-direction: column;
  align-items: center;
  width: 25px;
  padding: 10px 0 8px;
  background: #efefef;
  > svg:last-child{
    margin-top: auto;
  }
`

const Thumb = styled.div`
  width: 21px;
  height: ${p => p.$h}px;
  margin-top: ${p => p.$top}px;
  background: #c1c1c1;
`

const SideTab = styled.button`
  display: block;
  width: 145px;
  height: 49px;
  margin-left: -21px;
  padding-top: 2px;
  text-align: left;
  font-size: 22px;
  line-height: 45px;
  color: #2e3b4a;
  background: ${p => (p.$active ? '#f5cc5f' : '#a1c3ea')};
  border-top: 2px solid #23303c;
`

const Desk = styled.div`
  flex: 1;
  min-width: 0;
  padding-top: 1px;
`

const DeskTab = styled.div`
  position: relative;
  z-index: 1;
  display: flex;
  align-items: center;
  width: 128px;
  height: 44px;
  margin-bottom: -2px;
  padding-left: 4px;
  gap: 4px;
  font-size: 24px;
  line-height: 36px;
  white-space: nowrap;
  color: #333;
  background: #c2d6ec;
  border: 2px solid #84a3e2;
  border-bottom: 0;
  border-radius: 2px 2px 0 0;
  button{
    display: flex;
  }
`

const DeskBody = styled.div`
  display: flex;
  height: 457px;
  border: 2px solid #84a3e2;
  overflow: hidden;
`

const Cards = styled.div`
  display: flex;
  flex: 1;
  flex-direction: column;
  min-width: 0;
  gap: 26px;
  padding: 12px 12px 0;
`

const CardBox = styled.section`
  flex: 1;
  background: #fdfdfd;
  border: 0 solid #d6dce2;
  border-width: 0 1px;
`

const CardHeader = styled.div`
  display: flex;
  height: 44px;
  padding-left: 19px;
  background: #ebebed;
  border: 0 solid #d9dcdf;
  border-width: 1px 0 2px;
  h2{
    flex: 1;
    font-size: 22px;
    line-height: 42px;
    color: #222;
  }
  button{
    display: flex;
    align-items: center;
    justify-content: center;
    width: 63px;
    padding-right: 4px;
    border-left: 2px solid #dcdcde;
  }
`

const CardTools = styled.div`
  display: flex;
  align-items: center;
  height: 37px;
  gap: 29px;
  padding-left: 3px;
  font-size: 19px;
  line-height: 28px;
  > svg{
    margin-right: -2px;
    margin-bottom: 5px;
  }
`

const Table = styled.table`
  table-layout: fixed;
  width: 843px;
  border-collapse: separate;
  border-spacing: 0;
  border: 0 solid #e0e0e0;
  border-width: 1px 1px 6px 0;
  th{
    height: 38px;
    padding: 0 0 0 7px;
    text-align: left;
    font-size: 19px;
    line-height: 28px;
    font-weight: 300;
    border-left: 1px solid #ddd;
  }
`

const Col = styled.col`
  width: ${p => p.$w}px;
`

const Blank = styled.div`
  height: 118px;
`

const Pager = styled.div`
  display: flex;
  align-items: center;
  height: 43px;
  padding: 0 26px 0 30px;
  gap: 25px;
  font-size: 19px;
  line-height: 28px;
  color: #26323f;
  background: #c2d6ec;
  border: 0 solid #d3dae0;
  border-width: 2px 0;
  input{
    width: 74px;
    height: 28px;
    padding-right: 14px;
    text-align: center;
    background: #fdfdfd;
    border: 1px solid #d3d6da;
    font-family: ${FONT};
    font-weight: 400;
  }
`

const SelectWrap = styled.div`
  position: relative;
  select{
    display: block;
    width: 118px;
    height: 34px;
    appearance: none;
    background: #fdfdfd;
    border: 1px solid #d3d6da;
  }
  svg{
    position: absolute;
    right: 17px;
    top: 12px;
  }
`

const PageNav = styled.div`
  display: flex;
  gap: 15px;
  margin-left: auto;
  button{
    display: flex;
  }
`

const StatusRow = styled.div`
  display: flex;
  align-items: center;
  justify-content: flex-end;
  gap: 1px;
  height: 28px;
  font-size: 19px;
  line-height: 28px;
  color: #26323f;
  white-space: nowrap;
`

const Question = styled.article`
  position: absolute;
  top: 14px;
  right: 66px;
  width: 450px;
  padding: 14px 15px 15px;
  white-space: nowrap;
  background: #fdfdfd;
  border: 5px solid #66d45c;
  border-radius: 3px;
  h3{
    font-size: 24px;
    line-height: 36px;
    color: #2c3e50;
  }
  p{
    font-size: 21px;
    line-height: 31px;
    font-weight: 700;
    color: #999;
  }
`

const CloseMark = styled.span`
  position: absolute;
  top: 7px;
  right: 12px;
  color: #fff;
`

const SideTools = styled.div`
  position: absolute;
  top: 17px;
  right: 6px;
  display: grid;
  gap: 3px;
  button{
    display: flex;
    align-items: center;
    justify-content: center;
    width: 45px;
    height: 45px;
    border-radius: 4px;
    background: #66b84f;
  }
`

const Handle = styled.button`
  position: absolute;
  top: 333px;
  right: 0;
  width: 14px;
  height: 97px;
  background: #4dca7a;
  border-radius: 14px 0 0 14px;
  &::after{
    content: '';
    display: block;
    width: 2px;
    height: 24px;
    margin-left: 10px;
    background: #d8f5e2;
  }
`

const Actions = styled.div`
  display: flex;
  align-items: center;
  gap: 30px;
  height: 87px;
  padding-top: 1px;
  padding-right: 22px;
`

const ActionButton = styled.button`
  width: 315px;
  height: 60px;
  margin-left: -${p => p.$cut || 0}px;
  padding-top: 2px;
  font-size: 24px;
  line-height: 36px;
  font-weight: 400;
  color: ${p => (p.$solid ? '#fff' : '#4fbd78')};
  background: ${p => (p.$solid ? '#4dca7a' : '#fff')};
  border: 3px solid ${p => (p.$solid ? '#4dca7a' : '#55c17e')};
  border-radius: 6px;
`

const Mark = styled.button`
  display: flex;
  align-items: center;
  gap: 12px;
  margin-left: auto;
  font-size: 24px;
  line-height: 36px;
  color: #86949b;
  i{
    display: flex;
    align-items: center;
    justify-content: center;
    width: 33px;
    height: 33px;
    border-radius: 50%;
    background: #86949b;
  }
`

const Aside = styled.aside`
  display: flex;
  flex: 0 0 324px;
  flex-direction: column;
  overflow: hidden;
  border-left: 2px solid #dfe3e6;
`

const Sheet = styled.div`
  overflow: hidden;
  padding-left: 38px;
  h2{
    margin: 14px 0 8px -1px;
    font-size: 24px;
    line-height: 36px;
  }
`

const Numbers = styled.div`
  display: grid;
  grid-template-columns: repeat(4, 53px);
  gap: 24px 19px;
  &:first-child{
    margin-top: -46px;
  }
`

const Num = styled.button`
  width: 53px;
  height: 53px;
  font-size: 22px;
  line-height: 30px;
  font-weight: 400;
  color: ${p => (p.$done ? '#fff' : '#777')};
  background: ${p => (p.$done ? '#86949b' : '#fff')};
  border: 2px solid #86949b;
  border-radius: 50%;
`

const Legend = styled.ul`
  display: flex;
  gap: 65px;
  margin-top: 52px;
  padding-left: 39px;
  font-size: 18px;
  line-height: 26px;
  li{
    display: flex;
    flex-direction: column;
    align-items: center;
    width: 36px;
    white-space: nowrap;
  }
`

const Dot = styled.i`
  width: 23px;
  height: 23px;
  background: ${p => p.$bg};
  border: 3px solid ${p => p.$line};
  border-radius: 50%;
`

const Finish = styled.button`
  flex: none;
  width: 356px;
  height: 57px;
  margin: 14px 0 15px 31px;
  padding-top: 2px;
  font-size: 24px;
  line-height: 36px;
  font-weight: 400;
  color: #fff;
  background: #86949b;
  border-radius: 5px;
`

const BrowserFooter = styled.footer`
  display: flex;
  justify-content: flex-end;
  height: 35px;
  margin-right: -20px;
  background: #f7f7f7;
  border-top: 1px solid #e8e8e8;
  ${PlainButton}{
    width: 57px;
    color: #666;
  }
`

const TaskBar = styled.div`
  display: flex;
  height: 60px;
  gap: 8px;
  color: #fff;
  background: linear-gradient(90deg, #19242a, #1b2a30 40%, #1d2122 72%, #2b2a2f 78%, #2b292d 94%, #35211f);
`

const TaskView = styled.button`
  display: flex;
  align-items: center;
  width: 51px;
`

const TaskApp = styled.button`
  display: flex;
  align-items: center;
  justify-content: center;
  width: ${p => (p.$active ? 73 : 61)}px;
  padding-top: 3px;
  padding-right: 2px;
  background: ${p => (p.$active ? '#4a5459' : 'none')};
  border-bottom: 3px solid #76b4e0;
`

const Tray = styled.div`
  display: flex;
  align-items: center;
  gap: 10px;
  margin-left: auto;
  span{
    width: 26px;
    text-align: center;
    font-size: 19px;
    line-height: 28px;
    font-weight: 400;
  }
  svg:last-child{
    margin-left: 6px;
  }
`

const Clock = styled.div`
  display: flex;
  flex-direction: column;
  align-items: center;
  justify-content: center;
  width: 93px;
  margin-left: 16px;
  margin-right: -4px;
  font-size: 19px;
  line-height: 28px;
  font-weight: 400;
`
